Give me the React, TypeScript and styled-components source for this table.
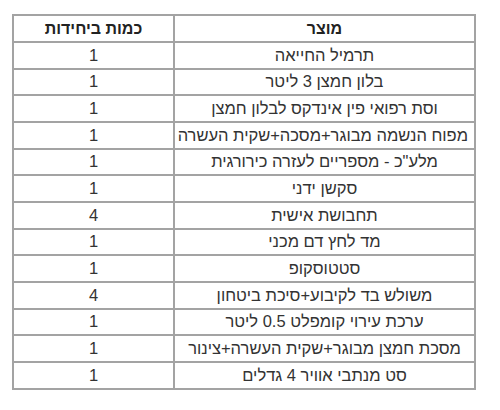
import React from 'react'
import styled, { createGlobalStyle } from 'styled-components'

const GlobalStyle = createGlobalStyle`
  html, body {
    margin: 0;
    padding: 0;
    background: #ffffff;
  }
`

const Page = styled.div`
  padding: 14px 24px 0 12px;
  font-family: 'Liberation Sans', Arial, sans-serif;
`

const Table = styled.table`
  direction: rtl;
  width: 464px;
  table-layout: fixed;
  border-collapse: collapse;
  border: 2px solid #a3a3a3;
  color: #333333;
  font-size: 16.5px;
`

const Row = styled.tr<{ $head?: boolean }>`
  height: ${p => (p.$head ? '27px' : '26.67px')};
`

const Cell = styled.td<{ $narrow?: boolean }>`
  border: 2px solid #a3a3a3;
  padding: 0 6px;
  text-align: center;
  vertical-align: middle;
  white-space: nowrap;
  width: ${p => (p.$narrow ? '147px' : 'auto')};
  line-height: 19px;
`

const HeadCell = styled(Cell).attrs({ as: 'th' })`
  font-weight: bold;
  font-size: 16px;
  color: #222222;
`

const items: [string, number][] = [
  ['תרמיל החייאה', 1],
  ['בלון חמצן 3 ליטר', 1],
  ['וסת רפואי פין אינדקס לבלון חמצן', 1],
  ['מפוח הנשמה מבוגר+מסכה+שקית העשרה', 1],
  ['מלע"כ - מספריים לעזרה כירורגית', 1],
  ['סקשן ידני', 1],
  ['תחבושת אישית', 4],
  ['מד לחץ דם מכני', 1],
  ['סטטוסקופ', 1],
  ['משולש בד לקיבוע+סיכת ביטחון', 4],
  ['ערכת עירוי קומפלט 0.5 ליטר', 1],
  ['מסכת חמצן מבוגר+שקית העשרה+צינור', 1],
  ['סט מנתבי אוויר 4 גדלים', 1],
]

export default function App() {
  return (
    <>
      <GlobalStyle />
      <Page>
        <Table>
          <thead>
            <Row $head>
              <HeadCell>מוצר</HeadCell>
              <HeadCell $narrow>כמות ביחידות</HeadCell>
            </Row>
          </thead>
          <tbody>
            {items.map(([name, qty]) => (
              <Row key={name}>
                <Cell>{name}</Cell>
                <Cell $narrow>{qty}</Cell>
              </Row>
            ))}
          </tbody>
        </Table>
      </Page>
    </>
  )
}
